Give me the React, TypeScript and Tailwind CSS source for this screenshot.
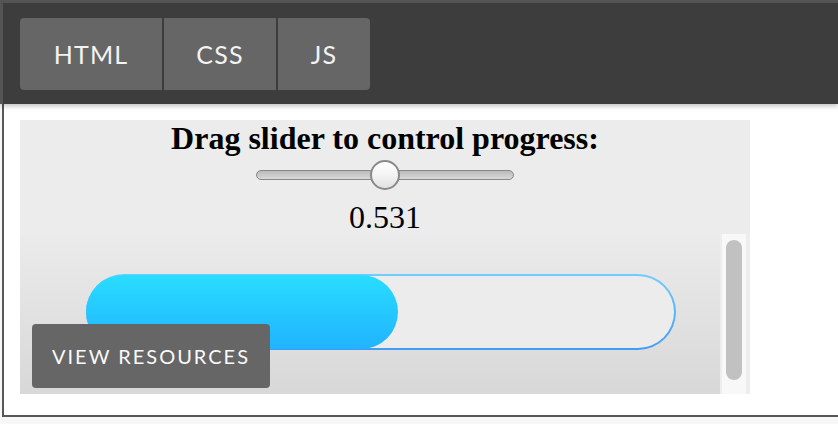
import React from "react";

export default function App() {
  return (
    <div className="w-[838px] h-[424px] bg-[#f7f7f7] overflow-hidden">
      {/* Header */}
      <div className="relative z-10 h-[104px] bg-[#3d3d3d] border-t-[3px] border-l-[3px] border-[#545454] pt-[15px] pl-[17px] shadow-[0_2px_5px_rgba(0,0,0,0.25)]">
        <div className="flex gap-[2px] font-['Lato',sans-serif] text-[25px] tracking-[1.2px] text-[#f3f3f3]">
          <div className="w-[142px] h-[72px] bg-[#666666] rounded-l-[4px] flex items-center justify-center pt-[1px]">HTML</div>
          <div className="w-[112px] h-[72px] bg-[#666666] flex items-center justify-center pt-[1px]">CSS</div>
          <div className="w-[92px] h-[72px] bg-[#666666] rounded-r-[4px] flex items-center justify-center pt-[1px]">JS</div>
        </div>
      </div>
      {/* Frame */}
      <div className="ml-[2px] h-[313px] bg-white border-l-2 border-b-2 border-[#575757] pt-[16px] pl-[16px]">
        <div className="relative w-[730px] h-[274px] bg-[#ececec] flex flex-col items-center font-['Liberation_Serif',serif] text-black">
          <div className="mt-[2px] text-[32px] leading-[32px] font-bold">Drag slider to control progress:</div>
          <div className="mt-[6px] relative w-[258px] h-[30px] flex items-center">
            <div className="w-full h-[10px] rounded-full border border-[#888888] bg-[linear-gradient(to_bottom,#bababa,#d8d8d8)]" />
            <div className="absolute left-[114px] top-0 w-[30px] h-[30px] rounded-full border-2 border-[#8a8a8a] bg-[linear-gradient(to_bottom,#ffffff,#f4f4f4_50%,#e2e2e2)]" />
          </div>
          <div className="mt-[11px] text-[32px] leading-[32px]">0.531</div>
          <div className="mt-[1px] flex w-full h-[160px]">
            <div className="relative w-[700px] h-full bg-[linear-gradient(to_bottom,#ebebeb,#d8d8d8)]">
              <div className="absolute left-[66px] top-[40px] w-[590px] h-[76px] rounded-full p-[2px] bg-[linear-gradient(to_bottom,#72cdfe,#449bf4)]">
                <div className="w-full h-full rounded-full bg-[#ececec]" />
                <div className="absolute left-0 top-[1px] bottom-[1px] w-[312px] rounded-full bg-[linear-gradient(to_bottom,#29ddff,#21b3ff)]" />
              </div>
            </div>
            <div className="w-[30px] h-full flex">
              <div className="w-[26px] h-full bg-[#f8f8f8] border-l-2 border-[#ededed] pt-[6px] pl-[4px]">
                <div className="w-[16px] h-[140px] rounded-full bg-[#c1c1c1]" />
              </div>
              <div className="w-[4px] h-full bg-[#ededed]" />
            </div>
          </div>
          <div className="absolute left-[12px] top-[204px] w-[238px] h-[64px] rounded-[4px] bg-[#666666] flex items-center justify-center font-['Lato',sans-serif] text-[20px] tracking-[2px] text-[#fafafa]">
            VIEW RESOURCES
          </div>
        </div>
      </div>
    </div>
  );
}
